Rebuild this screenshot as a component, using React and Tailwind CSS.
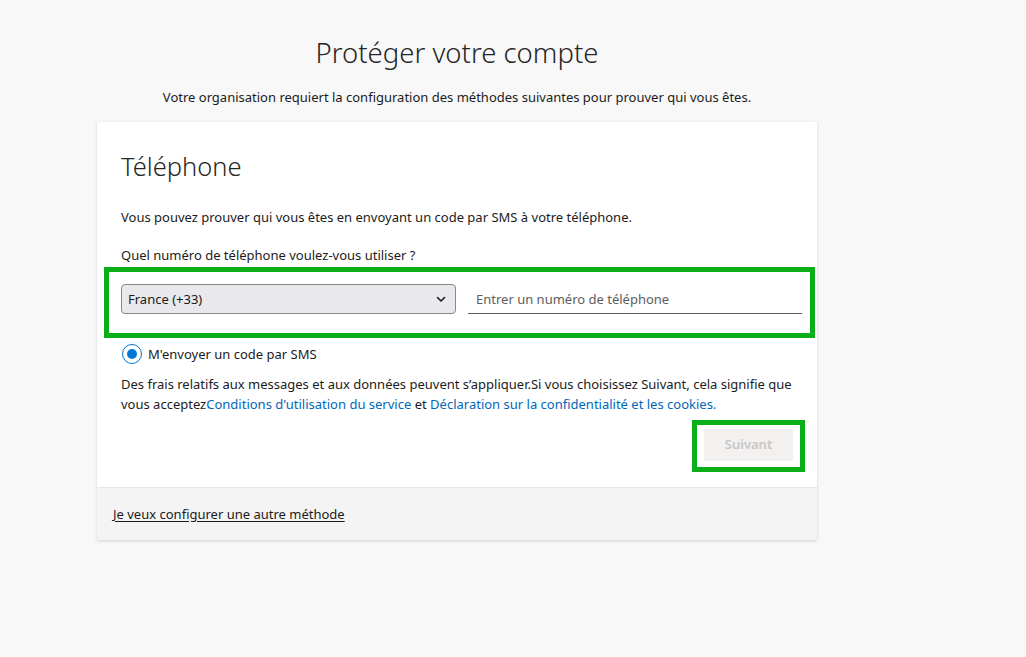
import React from "react";

const font = { fontFamily: '"Segoe UI", "Noto Sans", sans-serif' };

export default function App() {
  return (
    <div className="min-h-screen w-full bg-[#f8f8f8] text-[#1b1b1b]" style={font}>
      <div className="ml-[97px] w-[720px] pt-[33px]">
        {/* Header */}
        <h1 className="text-center text-[27.5px] font-light leading-[40px] text-[#262626]">
          Protéger votre compte
        </h1>
        <p className="mt-[14px] text-center text-[13px] leading-[20px]">
          Votre organisation requiert la configuration des méthodes suivantes pour prouver qui vous êtes.
        </p>

        {/* Card */}
        <div className="mt-[15px] bg-white shadow-[0_1px_3px_rgba(0,0,0,0.15)]">
          <div className="px-6 pt-[26px] pb-[26px]">
            <h2 className="text-[25.5px] font-light leading-[36px] text-[#262626]">Téléphone</h2>
            <p className="mt-[23px] text-[13px] leading-[20px]">
              Vous pouvez prouver qui vous êtes en envoyant un code par SMS à votre téléphone.
            </p>
            <p className="mt-[18px] text-[13px] leading-[20px]">
              Quel numéro de téléphone voulez-vous utiliser ?
            </p>

            {/* Phone row */}
            <div className="relative mt-[19px] flex w-[681px] gap-3">
              <div className="flex h-[30px] w-[335px] items-center justify-between rounded-[4px] border border-[#8a8886] bg-[#e9e8ec] pt-[2px] pl-[6px] pr-[8px] text-[13px]">
                <span>France (+33)</span>
                <svg width="12" height="12" viewBox="0 0 12 12" fill="none" className="-mt-[2px]">
                  <path d="M2.5 4.5 6 8l3.5-3.5" stroke="#1b1b1b" strokeWidth="1.6" strokeLinecap="round" strokeLinejoin="round" />
                </svg>
              </div>
              <div className="flex h-[30px] w-[334px] items-center border-b border-[#605e5c] pt-[3px] pl-[8px] text-[13px] text-[#605e5c]">
                Entrer un numéro de téléphone
              </div>
              <div className="pointer-events-none absolute -top-[17px] -bottom-[24px] -left-[17px] -right-[13px] border-[5px] border-[#0aae18]" />
            </div>

            {/* Radio */}
            <div className="mt-[30px] flex items-center gap-[6px] pl-[1px] text-[13px] leading-[20px]">
              <span className="flex h-[20px] w-[20px] items-center justify-center rounded-full border-[1.5px] border-[#0078d4]">
                <span className="h-[10px] w-[10px] rounded-full bg-[#0078d4]" />
              </span>
              <span>M'envoyer un code par SMS</span>
            </div>

            <p className="mt-[10px] text-[13px] leading-[20px]">
              Des frais relatifs aux messages et aux données peuvent s’appliquer.Si vous choisissez Suivant, cela signifie que vous acceptez
              <a className="text-[#0067b8]">Conditions d'utilisation du service</a> et{" "}
              <a className="text-[#0067b8]">Déclaration sur la confidentialité et les cookies.</a>
            </p>

            <div className="mt-[15px] flex justify-end">
              <div className="relative">
                <button className="h-[32px] w-[89px] bg-[#f2f1f0] text-[13px] font-semibold text-[#c8c6c4]">
                  Suivant
                </button>
                <div className="pointer-events-none absolute -top-[9px] -bottom-[11px] -left-[12px] -right-[12px] border-[5px] border-[#0aae18]" />
              </div>
            </div>
          </div>

          {/* Footer */}
          <div className="flex h-[53px] items-center border-t border-[#e6e6e6] bg-[#f4f4f4] px-4 pt-[1px] text-[13px]">
            <a className="underline underline-offset-2">Je veux configurer une autre méthode</a>
          </div>
        </div>
      </div>
    </div>
  );
}
